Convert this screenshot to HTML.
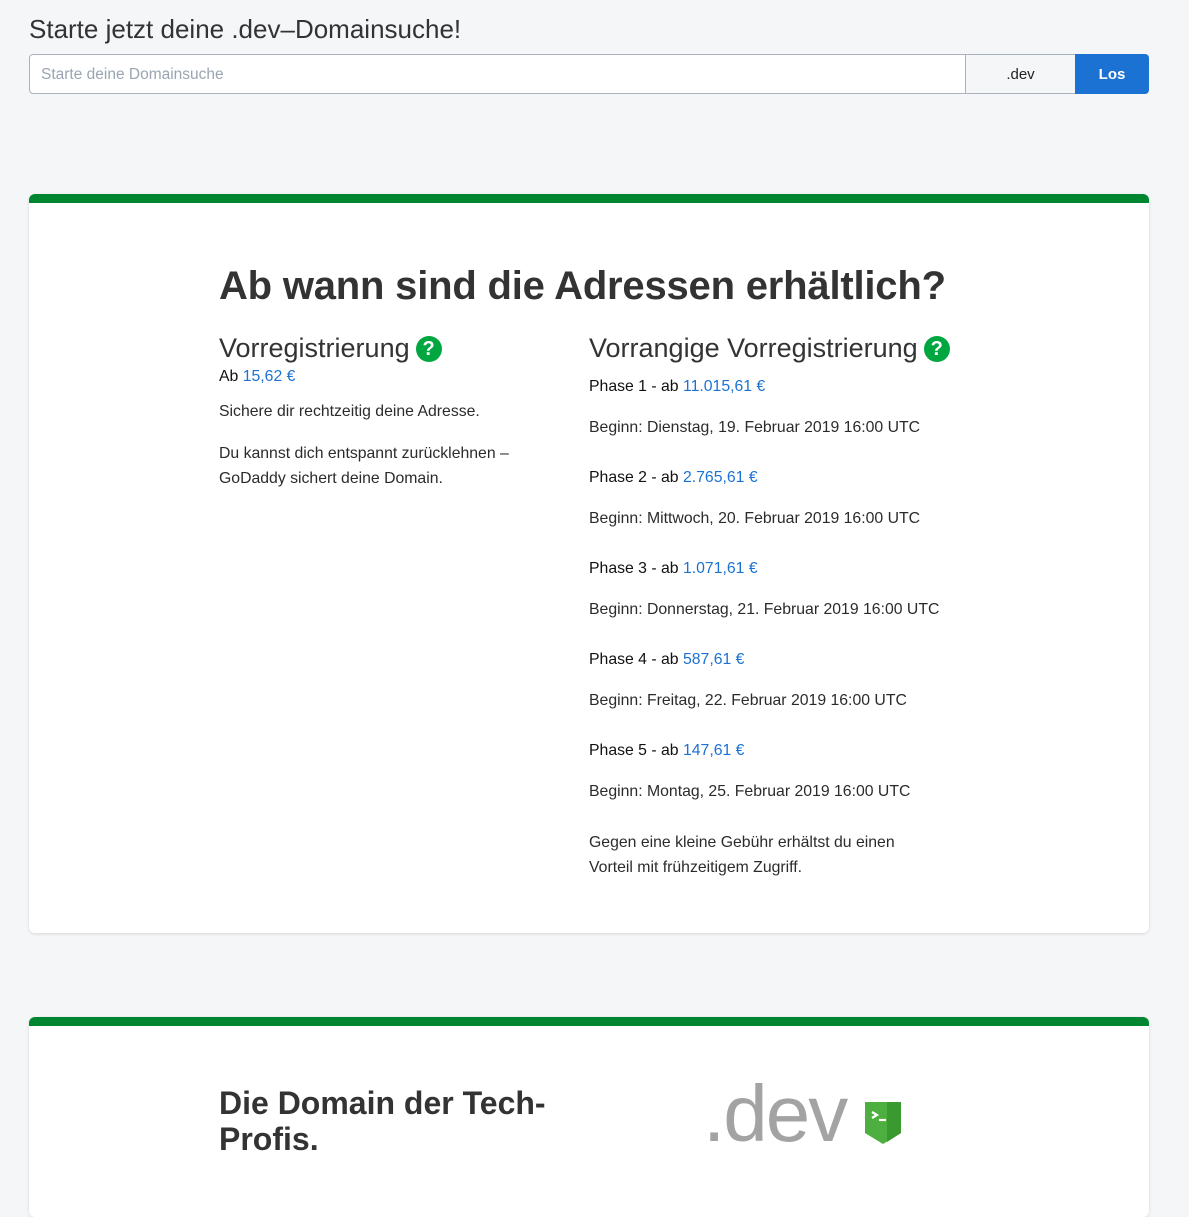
<!DOCTYPE html>
<html><head><meta charset="utf-8"><style>
*{margin:0;padding:0;box-sizing:border-box}
body{width:1189px;height:1177px;background:#f5f6f8;font-family:"Liberation Sans",sans-serif;color:#2b2b2b;position:relative;overflow:hidden}
.a{position:absolute;white-space:nowrap}
.b{color:#1b72d3}
.card{position:absolute;left:29px;width:1120px;background:#fff;border-top:9px solid #008631;border-radius:6px;box-shadow:0 1px 3px rgba(0,0,0,.12)}
.t{font-size:15.8px;color:#2b2b2b}
.ph{font-size:15.8px;color:#111}
.q{display:inline-block;width:26px;height:26px;border-radius:50%;background:#00a63f;color:#fff;font-weight:bold;font-size:20px;text-align:center;line-height:26px;vertical-align:2px;margin-left:6px}
</style></head><body>
<div class="a" style="left:29px;top:14px;font-size:26px;color:#333">Starte jetzt deine .dev–Domainsuche!</div>
<div class="a" style="left:29px;top:54px;width:937px;height:40px;background:#fff;border:1px solid #aab3bd;border-radius:4px 0 0 4px"></div>
<div class="a" style="left:41px;top:66px;font-size:15.5px;color:#9aa5b1">Starte deine Domainsuche</div>
<div class="a" style="left:965px;top:54px;width:111px;height:40px;background:#f5f6f8;border:1px solid #aab3bd;text-align:center;line-height:40px;font-size:15px;color:#222">.dev</div>
<div class="a" style="left:1075px;top:54px;width:74px;height:40px;background:#1b72d3;border-radius:0 4px 4px 0;text-align:center;line-height:41px;font-size:15px;font-weight:bold;color:#fff">Los</div>

<div class="card" style="top:194px;height:739px"></div>
<div class="a" style="left:219px;top:264px;font-size:40px;font-weight:bold;color:#333;letter-spacing:-0.2px">Ab wann sind die Adressen erhältlich?</div>
<div class="a" style="left:219px;top:333px;font-size:27px;color:#333">Vorregistrierung<span class="q">?</span></div>
<div class="a t" style="left:219px;top:368px;color:#111">Ab <span class="b">15,62 €</span></div>
<div class="a t" style="left:219px;top:403px">Sichere dir rechtzeitig deine Adresse.</div>
<div class="a t" style="left:219px;top:441px;line-height:25px">Du kannst dich entspannt zurücklehnen –<br>GoDaddy sichert deine Domain.</div>

<div class="a" style="left:589px;top:333px;font-size:27px;color:#333">Vorrangige Vorregistrierung<span class="q">?</span></div>
<div class="a ph" style="left:589px;top:378px">Phase 1 - ab <span class="b">11.015,61 €</span></div>
<div class="a t" style="left:589px;top:419px">Beginn: Dienstag, 19. Februar 2019 16:00 UTC</div>
<div class="a ph" style="left:589px;top:469px">Phase 2 - ab <span class="b">2.765,61 €</span></div>
<div class="a t" style="left:589px;top:510px">Beginn: Mittwoch, 20. Februar 2019 16:00 UTC</div>
<div class="a ph" style="left:589px;top:560px">Phase 3 - ab <span class="b">1.071,61 €</span></div>
<div class="a t" style="left:589px;top:601px">Beginn: Donnerstag, 21. Februar 2019 16:00 UTC</div>
<div class="a ph" style="left:589px;top:651px">Phase 4 - ab <span class="b">587,61 €</span></div>
<div class="a t" style="left:589px;top:692px">Beginn: Freitag, 22. Februar 2019 16:00 UTC</div>
<div class="a ph" style="left:589px;top:742px">Phase 5 - ab <span class="b">147,61 €</span></div>
<div class="a t" style="left:589px;top:783px">Beginn: Montag, 25. Februar 2019 16:00 UTC</div>
<div class="a t" style="left:589px;top:830px;line-height:25px">Gegen eine kleine Gebühr erhältst du einen<br>Vorteil mit frühzeitigem Zugriff.</div>

<div class="card" style="top:1017px;height:200px"></div>
<div class="a" style="left:219px;top:1085px;font-size:32px;font-weight:bold;color:#333;line-height:36px">Die Domain der Tech-<br>Profis.</div>
<div class="a" style="left:703px;top:1068px;font-size:80px;color:#a3a3a3;font-weight:300;letter-spacing:-2px">.dev</div>
<svg class="a" style="left:864px;top:1101px" width="38" height="44" viewBox="0 0 38 44">
<path d="M1 1H37V32L19 43L1 32Z" fill="#4caf3f"/>
<path d="M23 1H37V32L23 41Z" fill="#3b9a2f"/>
<path d="M8 11L13 14L8 17" stroke="#fff" stroke-width="2.2" fill="none"/>
<path d="M15 19H22" stroke="#fff" stroke-width="2.2"/>
</svg>
</body></html>
